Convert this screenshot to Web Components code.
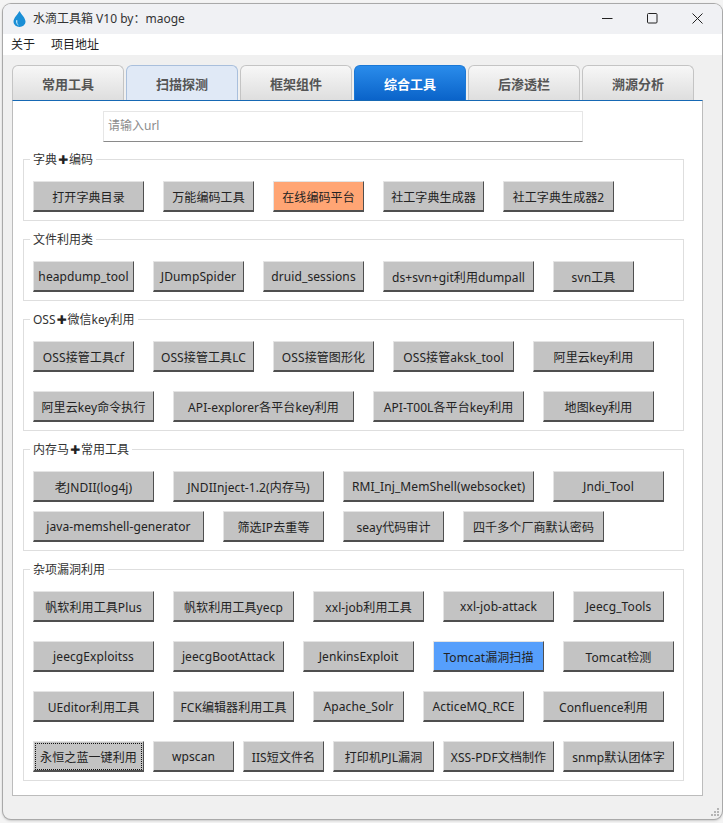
<!DOCTYPE html>
<html lang="zh"><head><meta charset="utf-8"><title>水滴工具箱</title>
<style>
html,body{margin:0;padding:0;background:#f4f4f4;height:823px;overflow:hidden;font-family:"Noto Sans","Noto Sans CJK SC",sans-serif;font-size:12px;color:#222}
</style></head><body>
<app-window>
  <win-titlebar slot="title">水滴工具箱 V10 by：maoge</win-titlebar>
  <menu-bar><menu-item>关于</menu-item><menu-item>项目地址</menu-item></menu-bar>
  <tab-bar>
    <tab-item>常用工具</tab-item><tab-item state="hover">扫描探测</tab-item><tab-item>框架组件</tab-item>
    <tab-item state="active">综合工具</tab-item><tab-item>后渗透栏</tab-item><tab-item>溯源分析</tab-item>
  </tab-bar>
  <tab-pane>
    <url-input placeholder="请输入url"></url-input>
    <tool-group>字典<plus-mark></plus-mark>编码
      <tool-row slot="rows"><tool-btn w="111">打开字典目录</tool-btn><tool-btn w="91">万能编码工具</tool-btn><tool-btn w="91" tone="orange">在线编码平台</tool-btn><tool-btn w="101">社工字典生成器</tool-btn><tool-btn w="111">社工字典生成器2</tool-btn></tool-row>
    </tool-group>
    <tool-group>文件利用类
      <tool-row slot="rows"><tool-btn w="101">heapdump_tool</tool-btn><tool-btn w="91">JDumpSpider</tool-btn><tool-btn w="101">druid_sessions</tool-btn><tool-btn w="151">ds+svn+git利用dumpall</tool-btn><tool-btn w="81">svn工具</tool-btn></tool-row>
    </tool-group>
    <tool-group>OSS<plus-mark></plus-mark>微信key利用
      <tool-row slot="rows"><tool-btn w="101">OSS接管工具cf</tool-btn><tool-btn w="101">OSS接管工具LC</tool-btn><tool-btn w="101">OSS接管图形化</tool-btn><tool-btn w="121">OSS接管aksk_tool</tool-btn><tool-btn w="121">阿里云key利用</tool-btn></tool-row>
      <tool-row slot="rows"><tool-btn w="121">阿里云key命令执行</tool-btn><tool-btn w="181">API-explorer各平台key利用</tool-btn><tool-btn w="151">API-T00L各平台key利用</tool-btn><tool-btn w="111">地图key利用</tool-btn></tool-row>
    </tool-group>
    <tool-group tight>内存马<plus-mark></plus-mark>常用工具
      <tool-row slot="rows"><tool-btn w="121">老JNDII(log4j)</tool-btn><tool-btn w="151">JNDIInject-1.2(内存马)</tool-btn><tool-btn w="191">RMI_Inj_MemShell(websocket)</tool-btn><tool-btn w="111">Jndi_Tool</tool-btn></tool-row>
      <tool-row slot="rows"><tool-btn w="171">java-memshell-generator</tool-btn><tool-btn w="101">筛选IP去重等</tool-btn><tool-btn w="101">seay代码审计</tool-btn><tool-btn w="141">四千多个厂商默认密码</tool-btn></tool-row>
    </tool-group>
    <tool-group>杂项漏洞利用
      <tool-row slot="rows"><tool-btn w="121">帆软利用工具Plus</tool-btn><tool-btn w="121">帆软利用工具yecp</tool-btn><tool-btn w="111">xxl-job利用工具</tool-btn><tool-btn w="111">xxl-job-attack</tool-btn><tool-btn w="91">Jeecg_Tools</tool-btn></tool-row>
      <tool-row slot="rows"><tool-btn w="121">jeecgExploitss</tool-btn><tool-btn w="111">jeecgBootAttack</tool-btn><tool-btn w="111">JenkinsExploit</tool-btn><tool-btn w="111" tone="blue">Tomcat漏洞扫描</tool-btn><tool-btn w="111">Tomcat检测</tool-btn></tool-row>
      <tool-row slot="rows"><tool-btn w="121">UEditor利用工具</tool-btn><tool-btn w="121">FCK编辑器利用工具</tool-btn><tool-btn w="91">Apache_Solr</tool-btn><tool-btn w="101">ActiceMQ_RCE</tool-btn><tool-btn w="121">Confluence利用</tool-btn></tool-row>
      <tool-row slot="rows" style="--row-gap:9px"><tool-btn w="111" focused>永恒之蓝一键利用</tool-btn><tool-btn w="81">wpscan</tool-btn><tool-btn w="81">IIS短文件名</tool-btn><tool-btn w="101">打印机PJL漏洞</tool-btn><tool-btn w="111">XSS-PDF文档制作</tool-btn><tool-btn w="111">snmp默认团体字</tool-btn></tool-row>
    </tool-group>
  </tab-pane>
</app-window>
<script>
function def(name, css, html, extra){
  customElements.define(name, class extends HTMLElement{
    constructor(){super();const r=this.attachShadow({mode:'open'});r.innerHTML='<style>'+css+'</style>'+html;}
    connectedCallback(){ if(extra) extra(this); }
  });
}
def('app-window',`
  :host{display:flex;flex-direction:column;box-sizing:border-box;margin:4px 1px 0 3px;height:815px;background:#f0f0f0;border-radius:8px;position:relative;
    box-shadow:0 0 0 1px #a9a9a9,0 1px 3px rgba(0,0,0,.35);overflow:hidden}
  svg{position:absolute;right:2px;bottom:2px}
`,`<slot name="title"></slot><slot></slot>
  <svg width="10" height="10" viewBox="0 0 10 10" fill="#b5b5b5"><rect x="7" y="1" width="2" height="2"/><rect x="4" y="4" width="2" height="2"/><rect x="7" y="4" width="2" height="2"/><rect x="1" y="7" width="2" height="2"/><rect x="4" y="7" width="2" height="2"/><rect x="7" y="7" width="2" height="2"/></svg>`);
def('win-titlebar',`
  :host{display:flex;align-items:center;height:30px;flex:none;background:#f0f1f4;font-size:12px;color:#333;padding:0 2px 0 9px}
  .drop{margin-right:6px;flex:none}
  .t{flex:1;white-space:nowrap;position:relative;top:-1px}
  .b{width:45px;height:30px;display:flex;align-items:center;justify-content:center;margin-top:-1px}
  .b svg{display:block}
`,`<svg class="drop" width="15" height="18" viewBox="0 0 15 18"><path d="M7.500 1C5.600 4.600 1.500 8 1.500 11.600 1.500 14.800 4.300 17 7.500 17S13.500 14.800 13.500 11.600C13.500 8 9.400 4.600 7.500 1Z" fill="#1b8fd6"/><path d="M4 11.200c0 2.300 1.300 3.800 3.200 4.200-1.800-1-2.100-2.600-1.800-4.600C5.400 9.600 4.100 9.900 4 11.200Z" fill="#bfe6fa"/></svg>
  <span class="t"><slot></slot></span>
  <span class="b"><svg width="11" height="11" viewBox="0 0 11 11"><path d="M0 5.500H10.500" stroke="#222" stroke-width="1"/></svg></span>
  <span class="b"><svg width="11" height="11" viewBox="0 0 11 11"><rect x=".5" y=".5" width="9.500" height="9.500" rx="1" fill="none" stroke="#222"/></svg></span>
  <span class="b"><svg width="11" height="11" viewBox="0 0 11 11"><path d="M.5 .5L10.500 10.500M10.500 .5L.5 10.500" stroke="#222" fill="none"/></svg></span>`);
def('menu-bar',`:host{display:flex;height:21px;flex:none;background:#fff;align-items:center;padding-left:8px;gap:16px}`,`<slot></slot>`);
def('menu-item',`:host{display:block;font-size:12px;color:#222;line-height:21px}`,`<slot></slot>`);
def('tab-bar',`:host{display:flex;gap:2px;margin:10px 0 0 9px;height:35px;flex:none;position:relative;z-index:1}`,`<slot></slot>`);
def('tab-item',`
  :host{display:flex;align-items:center;justify-content:center;box-sizing:border-box;width:112px;height:35px;border:1px solid #c4c4c4;border-bottom:0;border-radius:6px 6px 0 0;
    background:linear-gradient(#f7f7f7,#dedede);font-size:13px;font-weight:700;color:#555}
  :host([state=hover]){background:#e0e9f6;border-color:#a9bfdc}
  :host([state=active]){background:linear-gradient(#2a8ceb,#0a63c9);border-color:#1a78d6;color:#fff}
`,`<slot></slot>`);
def('tab-pane',`
  :host{display:flex;flex-direction:column;box-sizing:border-box;margin-left:9px;width:691px;height:696px;flex:none;background:#fff;border:1px solid #bcbcbc;border-top:1px solid #1668b4;padding:10px 18px 0 10px;gap:18px}
`,`<slot></slot>`);
def('url-input',`
  :host{display:block;margin:0 0 -1px 80px;width:480px;flex:none}
  input{display:block;box-sizing:border-box;width:100%;height:31px;border:1px solid #e6e6e6;border-bottom:1px solid #8a8a8a;background:#fff;padding:0 4px 2px;margin:0;font:12px "Noto Sans","Noto Sans CJK SC",sans-serif;outline:0}
  input::placeholder{color:#8c8c8c;opacity:1}
`,`<input>`,el=>{el.shadowRoot.querySelector('input').placeholder=el.getAttribute('placeholder')||''});
def('tool-group',`
  :host{display:block;box-sizing:border-box;width:661px;flex:none;border:1px solid #dedede;position:relative;padding:21px 9px 8px;--row:19px}
  :host([tight]){--row:9px}
  .title{position:absolute;left:6px;top:-9px;padding:0 3px;background:#fff;line-height:17px;font-size:12px;color:#333;white-space:nowrap}
  .rows{display:flex;flex-direction:column;gap:var(--row)}
`,`<div class="title"><slot></slot></div><div class="rows"><slot name="rows"></slot></div>`);
def('tool-row',`:host{display:flex;gap:var(--row-gap,19px);height:31px}`,`<slot></slot>`);
def('plus-mark',`:host{display:inline-block;width:12px;text-align:center;font-family:"DejaVu Sans",sans-serif;font-size:12px;color:#222}`,`✚`);
def('tool-btn',`
  :host{display:flex;align-items:center;justify-content:center;box-sizing:border-box;height:31px;flex:none;background:#c3c3c3;padding-top:1px;
    border-style:solid;border-width:1px 1px 2px 1px;border-color:#e4e4e4 #4f4f4f #4f4f4f #e4e4e4;font-size:12px;color:#222;white-space:nowrap;overflow:hidden;letter-spacing:.1px}
  :host([tone=orange]){background:#ffa574}
  :host([tone=blue]){background:#569ffc}
  :host([focused]){outline:1px dotted #111;outline-offset:-3px}
`,`<slot></slot>`,el=>{el.style.width=el.getAttribute('w')+'px'});
</script>
</body></html>
